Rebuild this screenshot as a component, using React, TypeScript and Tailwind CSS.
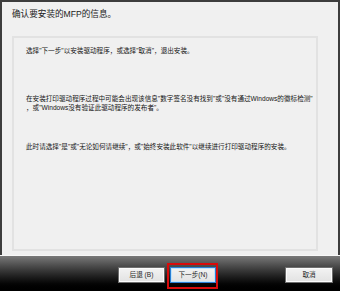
// 安装向导 - MFP 驱动确认对话框
import React from 'react';

const btnBase =
  'h-[16px] flex items-center justify-center text-[6.6px] leading-none text-[#1e1e1e] bg-gradient-to-b from-[#f3f3f3] to-[#e2e2e2]';

const App: React.FC = () => {
  return (
    <div className="w-[340px] h-[291px] flex flex-col overflow-hidden bg-black font-['Liberation_Sans','Noto_Sans_CJK_SC',sans-serif]">
      {/* 内容区 */}
      <div className="h-[255px] flex flex-col bg-[#f0f0f0] border-x-2 border-t-2 border-[#3d3d3d] pl-[10px] pr-[20px] pt-[7px]">
        <h1 className="text-[8.6px] leading-[10px] text-[#1a1a1a] font-normal">确认要安装的MFP的信息。</h1>

        <div className="mt-[17px] h-[215px] border-2 border-[#e2e2e2] pl-[12px] pt-[8px] text-[6.6px] leading-[9px] text-[#151515]">
          <p>选择"下一步"以安装驱动程序，或选择"取消"，退出安装。</p>
          <p className="mt-[39px]">
            在安装打印驱动程序过程中可能会出现该信息"数字签名没有找到"或"没有通过Windows的徽标检测"
            <br />
            ，或"Windows没有验证此驱动程序的发布者"。
          </p>
          <p className="mt-[30px]">此时请选择"是"或"无论如何请继续"，或"始终安装此软件"以继续进行打印驱动程序的安装。</p>
        </div>
      </div>

      {/* 按钮栏 */}
      <div className="flex-1 border-t border-[#f8f8f8] bg-gradient-to-b from-[#7a7a7a] to-black flex items-start pt-[11px] pl-[118px] pr-[7px]">
        <button className={`${btnBase} w-[47px] border border-[#6e6e6e] shadow-[inset_0_0_0_1px_#fbfbfb]`}>后退 (B)</button>
        <div className="relative ml-[5px]">
          <button className={`${btnBase} w-[46px] border border-[#2a7fd4] shadow-[inset_0_0_0_1px_#bfe3fb]`}>下一步(N)</button>
          <div className="absolute -left-[3px] -right-[2px] -top-[4px] -bottom-[6px] border-2 border-[#d80b0b]" />
        </div>
        <div className="flex-1" />
        <button className={`${btnBase} w-[48px] border border-[#6e6e6e] shadow-[inset_0_0_0_1px_#fbfbfb]`}>取消</button>
      </div>
    </div>
  );
};

export default App;
